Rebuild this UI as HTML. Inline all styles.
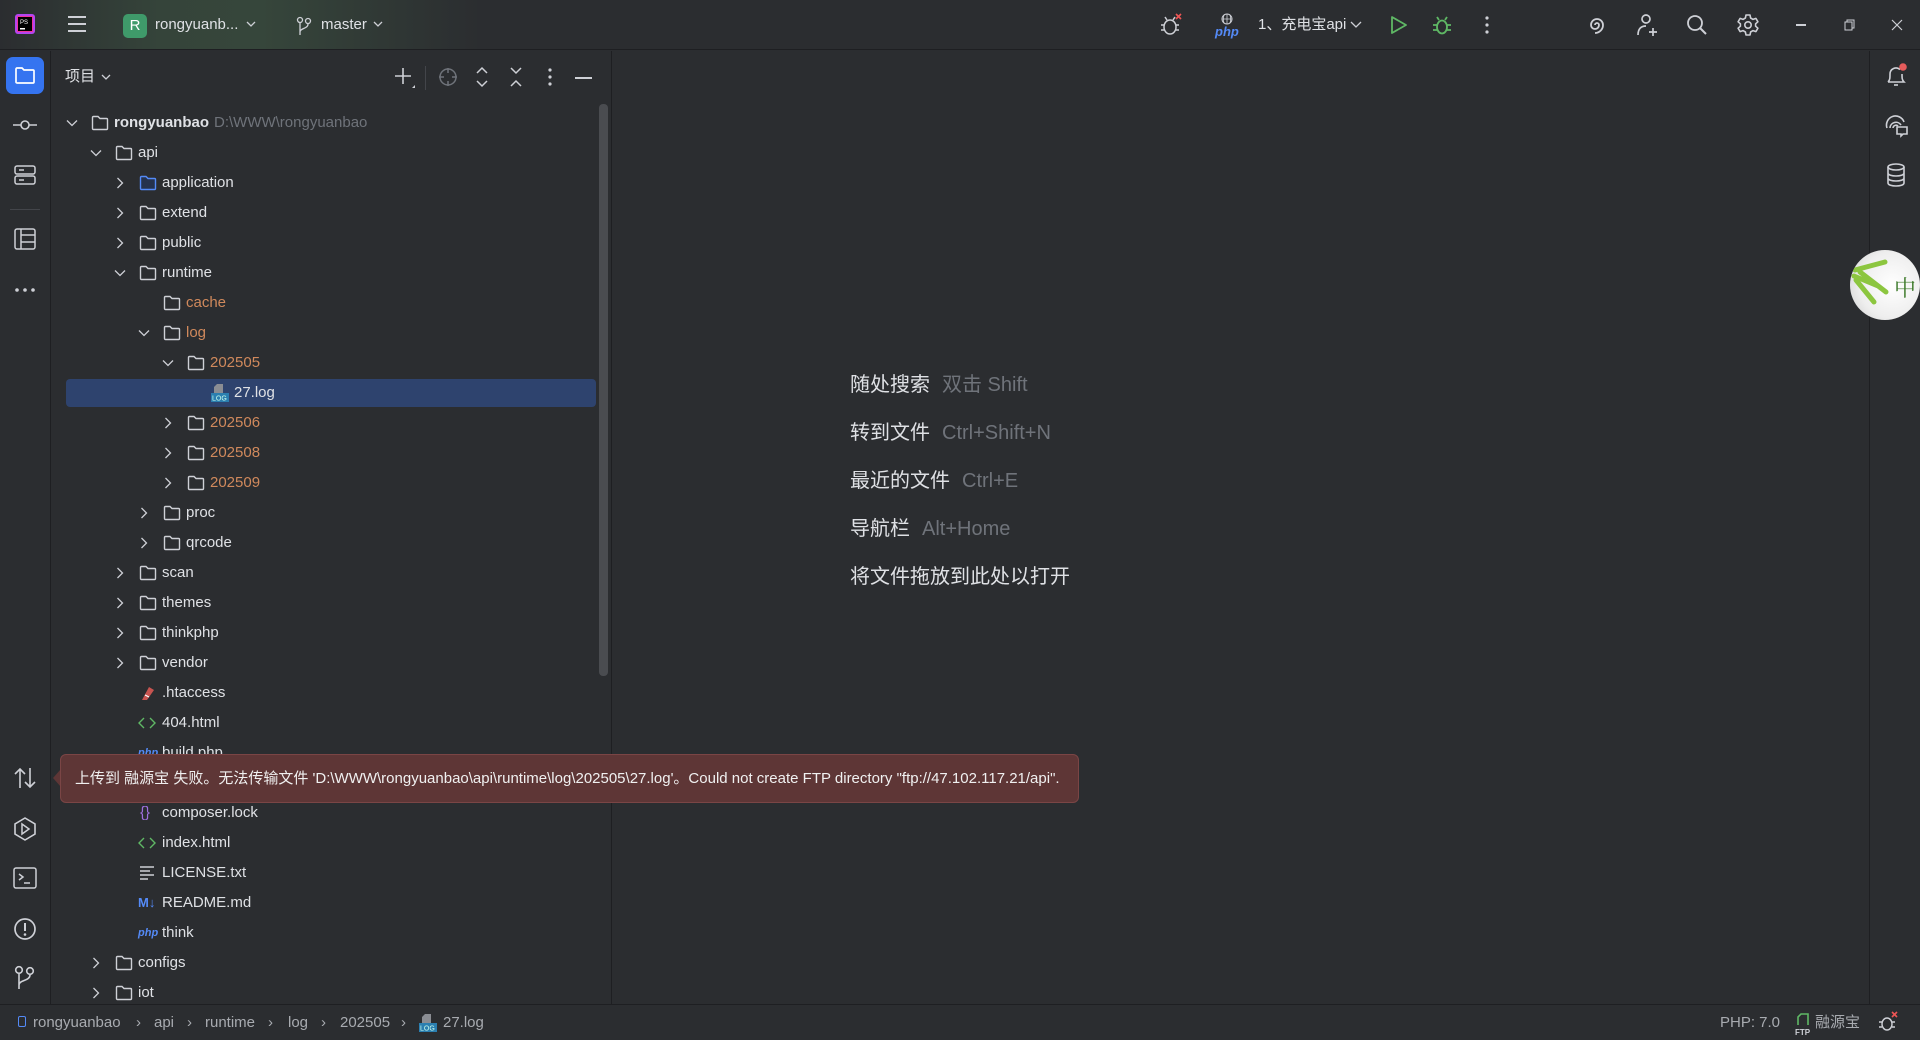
<!DOCTYPE html>
<html><head><meta charset="utf-8"><style>
*{margin:0;padding:0;box-sizing:border-box}
body{width:1920px;height:1040px;background:#2b2d30;font-family:"Liberation Sans","Noto Sans CJK SC",sans-serif;color:#dfe1e5;position:relative;overflow:hidden;font-size:15px}
.a{position:absolute}
#top{left:0;top:0;width:1920px;height:50px;background:linear-gradient(90deg,#2b2d30 0,#35443a 160px,#36463b 260px,#2b2d30 480px);border-bottom:1px solid #1e1f22}
#left{left:0;top:51px;width:51px;height:953px;border-right:1px solid #1e1f22}
#panel{left:51px;top:51px;width:561px;height:953px;border-right:1px solid #1e1f22}
#editor{left:612px;top:51px;width:1257px;height:953px;background:#2b2d30}
#right{left:1869px;top:51px;width:51px;height:953px;border-left:1px solid #1e1f22}
#status{left:0;top:1004px;width:1920px;height:36px;border-top:1px solid #1e1f22;background:#2b2d30}
#tree{position:absolute;left:0;top:2px;width:0;height:0}
.row{position:absolute;height:30px;line-height:30px;white-space:nowrap;font-size:15px}
.row svg{position:absolute;top:7px}
.or{color:#d0895c}
.hint{position:absolute;left:850px;font-size:20px;color:#dfe1e5;white-space:nowrap}
.hint span{color:#6f737a;margin-left:12px}
.bc{position:absolute;top:8px;font-size:15px;line-height:20px;color:#a8abb0;white-space:nowrap}
svg{overflow:visible}
</style></head><body>
<div id="top" class="a">
 <svg class="a" style="left:14px;top:13px" width="22" height="22" viewBox="0 0 22 22"><rect x="1" y="1" width="20" height="20" rx="3" fill="#b345f1"/><rect x="3" y="3" width="16" height="16" fill="#ff2d8a" opacity=".8"/><rect x="4" y="4" width="14" height="14" fill="#000"/><text x="6" y="11" font-size="6" fill="#fff" font-family="Liberation Sans">PS</text><rect x="6" y="15" width="5" height="1.5" fill="#fff"/></svg>
 <svg class="a" style="left:67px;top:15px" width="20" height="18"><path d="M1 2h18M1 9h18M1 16h18" stroke="#ced0d6" stroke-width="2"/></svg>
 <div class="a" style="left:123px;top:14px;width:24px;height:24px;border-radius:5px;background:#3f9a6a;color:#fff;font-size:15px;text-align:center;line-height:24px">R</div>
 <div class="a" style="left:155px;top:15px;font-size:15px;line-height:20px">rongyuanb...</div>
 <svg class="a" style="left:246px;top:21px" width="10" height="6"><path d="M1 1l4 4 4-4" stroke="#ced0d6" fill="none" stroke-width="1.3"/></svg>
 <svg class="a" style="left:297px;top:16px" width="14" height="20"><circle cx="3" cy="4" r="2.5" stroke="#ced0d6" fill="none" stroke-width="1.3"/><circle cx="11" cy="5" r="2.5" stroke="#ced0d6" fill="none" stroke-width="1.3"/><path d="M3 7v12M11 8c0 5-8 4-8 8" stroke="#ced0d6" fill="none" stroke-width="1.3"/></svg>
 <div class="a" style="left:321px;top:15px;font-size:15px;line-height:20px">master</div>
 <svg class="a" style="left:373px;top:21px" width="10" height="6"><path d="M1 1l4 4 4-4" stroke="#ced0d6" fill="none" stroke-width="1.3"/></svg>
 <svg class="a" style="left:1160px;top:13px" width="24" height="24"><ellipse cx="10" cy="14" rx="6" ry="7" stroke="#ced0d6" fill="none" stroke-width="1.5"/><path d="M4 12H1M4 17H1M16 12h3M16 17h3M7 7l-2-3M13 7l2-3" stroke="#ced0d6" stroke-width="1.5"/><path d="M16 1l5 5M21 1l-5 5" stroke="#e55" stroke-width="1.6"/></svg>
 <svg class="a" style="left:1215px;top:12px" width="24" height="26"><circle cx="12" cy="7" r="5" stroke="#ced0d6" fill="none"/><path d="M7 7h10M12 2v10M9 3c-1 3-1 5 0 8M15 3c1 3 1 5 0 8" stroke="#ced0d6" fill="none" stroke-width=".8"/><text x="0" y="24" font-size="13" font-style="italic" font-weight="bold" fill="#548af7" font-family="Liberation Sans">php</text></svg>
 <div class="a" style="left:1258px;top:15px;font-size:15px;line-height:20px">1、充电宝api</div>
 <svg class="a" style="left:1350px;top:21px" width="12" height="7"><path d="M1 1l5 5 5-5" stroke="#ced0d6" fill="none" stroke-width="1.3"/></svg>
 <svg class="a" style="left:1390px;top:15px" width="18" height="20"><path d="M2 2l14 8-14 8z" stroke="#5fb865" fill="none" stroke-width="1.8" stroke-linejoin="round"/></svg>
 <svg class="a" style="left:1432px;top:14px" width="20" height="22"><ellipse cx="10" cy="13" rx="5" ry="6.5" stroke="#5fb865" fill="none" stroke-width="1.8"/><path d="M5 11H1M5 16H1M15 11h4M15 16h4M7 6L5 3M13 6l2-3" stroke="#5fb865" stroke-width="1.8"/></svg>
 <svg class="a" style="left:1484px;top:15px" width="6" height="20"><circle cx="3" cy="3" r="1.6" fill="#ced0d6"/><circle cx="3" cy="10" r="1.6" fill="#ced0d6"/><circle cx="3" cy="17" r="1.6" fill="#ced0d6"/></svg>
 <svg class="a" style="left:1586px;top:14px" width="22" height="22"><path d="M11 11m-2 0a2 2 0 1 1 4 0a4 4 0 1 1 -8 0a6 6 0 1 1 12 0a8 8 0 0 1-8 8" stroke="#ced0d6" fill="none" stroke-width="1.8"/></svg>
 <svg class="a" style="left:1636px;top:13px" width="24" height="24"><circle cx="10" cy="6" r="4" stroke="#ced0d6" fill="none" stroke-width="1.7"/><path d="M2 22c0-6 3-9 8-9M17 15v8M13 19h8" stroke="#ced0d6" fill="none" stroke-width="1.7"/></svg>
 <svg class="a" style="left:1686px;top:14px" width="22" height="22"><circle cx="9" cy="9" r="7" stroke="#ced0d6" fill="none" stroke-width="1.8"/><path d="M14 14l6 6" stroke="#ced0d6" stroke-width="2"/></svg>
 <svg class="a" style="left:1736px;top:13px" width="24" height="24" viewBox="0 0 24 24"><path d="M10 2h4l.6 3 2.4 1.4 2.9-1 2 3.4-2.3 2v2.4l2.3 2-2 3.4-2.9-1-2.4 1.4-.6 3h-4l-.6-3-2.4-1.4-2.9 1-2-3.4 2.3-2v-2.4l-2.3-2 2-3.4 2.9 1L9.4 5z" stroke="#ced0d6" fill="none" stroke-width="1.6" stroke-linejoin="round"/><circle cx="12" cy="12" r="3.2" stroke="#ced0d6" fill="none" stroke-width="1.6"/></svg>
 <div class="a" style="left:1796px;top:24px;width:10px;height:1.5px;background:#ced0d6"></div>
 <svg class="a" style="left:1844px;top:19px" width="12" height="12"><rect x="1" y="3" width="7" height="8" stroke="#ced0d6" fill="none"/><path d="M3 3V1h7v8H8" stroke="#ced0d6" fill="none"/></svg>
 <svg class="a" style="left:1891px;top:19px" width="12" height="12"><path d="M1 1l10 10M11 1L1 11" stroke="#ced0d6" stroke-width="1.2"/></svg>
</div>

<div id="left" class="a">
 <div class="a" style="left:6px;top:6px;width:38px;height:37px;border-radius:7px;background:#3574f0"></div>
 <svg class="a" style="left:14px;top:15px" width="22" height="19"><path d="M2 3a1 1 0 0 1 1-1h5l2 2h9a1 1 0 0 1 1 1v11a1 1 0 0 1-1 1H3a1 1 0 0 1-1-1z" stroke="#fff" fill="none" stroke-width="1.7"/></svg>
 <svg class="a" style="left:12px;top:67px" width="26" height="14"><circle cx="13" cy="7" r="4" stroke="#ced0d6" fill="none" stroke-width="1.6"/><path d="M1 7h8M17 7h8" stroke="#ced0d6" stroke-width="1.6"/></svg>
 <svg class="a" style="left:14px;top:114px" width="22" height="20"><rect x="1" y="1" width="20" height="8" rx="2" stroke="#ced0d6" fill="none" stroke-width="1.5"/><rect x="1" y="11" width="20" height="8" rx="2" stroke="#ced0d6" fill="none" stroke-width="1.5"/><path d="M5 5h5M5 15h5" stroke="#ced0d6" stroke-width="1.5"/></svg>
 <div class="a" style="left:10px;top:158px;width:30px;height:1px;background:#43454a"></div>
 <svg class="a" style="left:14px;top:177px" width="22" height="22"><rect x="1" y="1" width="20" height="20" rx="2" stroke="#ced0d6" fill="none" stroke-width="1.5"/><path d="M7 1v20M7 7h14M7 14h14" stroke="#ced0d6" stroke-width="1.5"/></svg>
 <svg class="a" style="left:14px;top:236px" width="22" height="6"><circle cx="3" cy="3" r="1.8" fill="#ced0d6"/><circle cx="11" cy="3" r="1.8" fill="#ced0d6"/><circle cx="19" cy="3" r="1.8" fill="#ced0d6"/></svg>
 <svg class="a" style="left:14px;top:716px" width="22" height="22"><path d="M6 21V2M1 7l5-5 5 5M16 1v19M11 15l5 5 5-5" stroke="#ced0d6" fill="none" stroke-width="1.6"/></svg>
 <svg class="a" style="left:13px;top:766px" width="24" height="24"><path d="M12 1l10 6v10l-10 6-10-6V7z" stroke="#ced0d6" fill="none" stroke-width="1.6"/><path d="M9 7l7 5-7 5z" stroke="#ced0d6" fill="none" stroke-width="1.5"/></svg>
 <svg class="a" style="left:13px;top:816px" width="24" height="22"><rect x="1" y="1" width="22" height="20" rx="2" stroke="#ced0d6" fill="none" stroke-width="1.5"/><path d="M6 7l4 3-4 3M11 16h6" stroke="#ced0d6" fill="none" stroke-width="1.5"/></svg>
 <svg class="a" style="left:13px;top:866px" width="24" height="24"><circle cx="12" cy="12" r="10" stroke="#ced0d6" fill="none" stroke-width="1.7"/><path d="M12 6v8" stroke="#ced0d6" stroke-width="2"/><circle cx="12" cy="17.5" r="1.3" fill="#ced0d6"/></svg>
 <svg class="a" style="left:14px;top:914px" width="22" height="26"><circle cx="5" cy="5" r="3.3" stroke="#ced0d6" fill="none" stroke-width="1.6"/><circle cx="16" cy="6" r="3.3" stroke="#ced0d6" fill="none" stroke-width="1.6"/><path d="M5 9v15M16 10c0 6-11 5-11 10" stroke="#ced0d6" fill="none" stroke-width="1.6"/></svg>
</div>

<div id="panel" class="a">
 <div class="a" style="left:14px;top:15px;font-size:15px;line-height:22px">项目</div>
 <svg class="a" style="left:50px;top:23px" width="10" height="6"><path d="M1 1l4 4 4-4" stroke="#ced0d6" fill="none" stroke-width="1.3"/></svg>
 <svg class="a" style="left:343px;top:16px" width="22" height="22"><path d="M9 1v16M1 9h16" stroke="#ced0d6" stroke-width="1.6"/><path d="M21 18v3h-3z" fill="#ced0d6"/></svg>
 <div class="a" style="left:374px;top:15px;width:1px;height:24px;background:#43454a"></div>
 <svg class="a" style="left:387px;top:16px" width="20" height="20"><circle cx="10" cy="10" r="8" stroke="#6f737a" fill="none" stroke-width="1.5"/><path d="M10 1v5M10 14v5M1 10h5M14 10h5" stroke="#6f737a" stroke-width="1.5"/></svg>
 <svg class="a" style="left:425px;top:16px" width="12" height="20"><path d="M1 6l5-5 5 5M1 14l5 5 5-5" stroke="#ced0d6" fill="none" stroke-width="1.5"/></svg>
 <svg class="a" style="left:459px;top:16px" width="12" height="20"><path d="M1 1l5 5 5-5M1 19l5-5 5 5" stroke="#ced0d6" fill="none" stroke-width="1.5"/></svg>
 <svg class="a" style="left:497px;top:17px" width="4" height="18"><circle cx="2" cy="2" r="1.6" fill="#ced0d6"/><circle cx="2" cy="9" r="1.6" fill="#ced0d6"/><circle cx="2" cy="16" r="1.6" fill="#ced0d6"/></svg>
 <div class="a" style="left:524px;top:26px;width:17px;height:1.6px;background:#ced0d6"></div>
 <div class="a" style="left:548px;top:53px;width:9px;height:572px;border-radius:4px;background:#4a4c50"></div>
</div>

<svg width="0" height="0" style="position:absolute"><defs>
<symbol id="fo" viewBox="0 0 18 16"><path d="M1.5 2.5a1 1 0 0 1 1-1h4.5l2 2h6.5a1 1 0 0 1 1 1v9a1 1 0 0 1-1 1h-13a1 1 0 0 1-1-1z" stroke="#ced0d6" stroke-width="1.4" fill="#2b2d30"/></symbol>
<symbol id="fb" viewBox="0 0 18 16"><path d="M1.5 2.5a1 1 0 0 1 1-1h4.5l2 2h6.5a1 1 0 0 1 1 1v9a1 1 0 0 1-1 1h-13a1 1 0 0 1-1-1z" stroke="#548af7" stroke-width="1.4" fill="#25324d"/></symbol>
<symbol id="dn" viewBox="0 0 12 8"><path d="M1 1.5l5 5 5-5" stroke="#ced0d6" fill="none" stroke-width="1.3"/></symbol>
<symbol id="rt" viewBox="0 0 8 12"><path d="M1.5 1l5 5-5 5" stroke="#ced0d6" fill="none" stroke-width="1.3"/></symbol>
</defs></svg>

<div id="tree">
<div class="a" style="left:66px;top:377px;width:530px;height:28px;border-radius:4px;background:#2e436e"></div>
<div class="row" style="left:66px;top:106px;width:540px">
 <svg style="left:0;top:11px" width="12" height="8"><use href="#dn"/></svg>
 <svg style="left:25px" width="18" height="16"><use href="#fo"/></svg>
 <span style="position:absolute;left:48px;font-weight:bold">rongyuanbao</span><span style="position:absolute;left:148px;color:#6f737a">D:\WWW\rongyuanbao</span>
</div>
<div class="row" style="left:90px;top:136px"><svg style="left:0;top:11px" width="12" height="8"><use href="#dn"/></svg><svg style="left:25px" width="18" height="16"><use href="#fo"/></svg><span style="position:absolute;left:48px">api</span></div>
<div class="row" style="left:116px;top:166px"><svg style="left:0;top:9px" width="8" height="12"><use href="#rt"/></svg><svg style="left:23px" width="18" height="16"><use href="#fb"/></svg><span style="position:absolute;left:46px">application</span></div>
<div class="row" style="left:116px;top:196px"><svg style="left:0;top:9px" width="8" height="12"><use href="#rt"/></svg><svg style="left:23px" width="18" height="16"><use href="#fo"/></svg><span style="position:absolute;left:46px">extend</span></div>
<div class="row" style="left:116px;top:226px"><svg style="left:0;top:9px" width="8" height="12"><use href="#rt"/></svg><svg style="left:23px" width="18" height="16"><use href="#fo"/></svg><span style="position:absolute;left:46px">public</span></div>
<div class="row" style="left:114px;top:256px"><svg style="left:0;top:11px" width="12" height="8"><use href="#dn"/></svg><svg style="left:25px" width="18" height="16"><use href="#fo"/></svg><span style="position:absolute;left:48px">runtime</span></div>
<div class="row or" style="left:138px;top:286px"><svg style="left:25px" width="18" height="16"><use href="#fo"/></svg><span style="position:absolute;left:48px">cache</span></div>
<div class="row or" style="left:138px;top:316px"><svg style="left:0;top:11px" width="12" height="8"><use href="#dn"/></svg><svg style="left:25px" width="18" height="16"><use href="#fo"/></svg><span style="position:absolute;left:48px">log</span></div>
<div class="row or" style="left:162px;top:346px"><svg style="left:0;top:11px" width="12" height="8"><use href="#dn"/></svg><svg style="left:25px" width="18" height="16"><use href="#fo"/></svg><span style="position:absolute;left:48px">202505</span></div>
<div class="row" style="left:210px;top:376px">
 <svg style="left:1px;top:6px" width="18" height="18"><path d="M6 0h6v9H3V3z" fill="#8a8d93"/><rect x="0" y="9" width="18" height="9" fill="#2b7fb0"/><text x="1" y="16.5" font-size="7" fill="#cfe" font-family="Liberation Sans">LOG</text></svg>
 <span style="position:absolute;left:24px">27.log</span></div>
<div class="row or" style="left:164px;top:406px"><svg style="left:0;top:9px" width="8" height="12"><use href="#rt"/></svg><svg style="left:23px" width="18" height="16"><use href="#fo"/></svg><span style="position:absolute;left:46px">202506</span></div>
<div class="row or" style="left:164px;top:436px"><svg style="left:0;top:9px" width="8" height="12"><use href="#rt"/></svg><svg style="left:23px" width="18" height="16"><use href="#fo"/></svg><span style="position:absolute;left:46px">202508</span></div>
<div class="row or" style="left:164px;top:466px"><svg style="left:0;top:9px" width="8" height="12"><use href="#rt"/></svg><svg style="left:23px" width="18" height="16"><use href="#fo"/></svg><span style="position:absolute;left:46px">202509</span></div>
<div class="row" style="left:140px;top:496px"><svg style="left:0;top:9px" width="8" height="12"><use href="#rt"/></svg><svg style="left:23px" width="18" height="16"><use href="#fo"/></svg><span style="position:absolute;left:46px">proc</span></div>
<div class="row" style="left:140px;top:526px"><svg style="left:0;top:9px" width="8" height="12"><use href="#rt"/></svg><svg style="left:23px" width="18" height="16"><use href="#fo"/></svg><span style="position:absolute;left:46px">qrcode</span></div>
<div class="row" style="left:116px;top:556px"><svg style="left:0;top:9px" width="8" height="12"><use href="#rt"/></svg><svg style="left:23px" width="18" height="16"><use href="#fo"/></svg><span style="position:absolute;left:46px">scan</span></div>
<div class="row" style="left:116px;top:586px"><svg style="left:0;top:9px" width="8" height="12"><use href="#rt"/></svg><svg style="left:23px" width="18" height="16"><use href="#fo"/></svg><span style="position:absolute;left:46px">themes</span></div>
<div class="row" style="left:116px;top:616px"><svg style="left:0;top:9px" width="8" height="12"><use href="#rt"/></svg><svg style="left:23px" width="18" height="16"><use href="#fo"/></svg><span style="position:absolute;left:46px">thinkphp</span></div>
<div class="row" style="left:116px;top:646px"><svg style="left:0;top:9px" width="8" height="12"><use href="#rt"/></svg><svg style="left:23px" width="18" height="16"><use href="#fo"/></svg><span style="position:absolute;left:46px">vendor</span></div>
<div class="row" style="left:138px;top:676px"><svg style="left:2px;top:7px" width="16" height="16"><path d="M2 15L9 2l5 3-7 10z" fill="#c75450"/><path d="M5 10l4 2" stroke="#fff" stroke-width="1.2"/></svg><span style="position:absolute;left:24px">.htaccess</span></div>
<div class="row" style="left:138px;top:706px"><svg style="left:0;top:9px" width="18" height="12"><path d="M6 1L1 6l5 5M12 1l5 5-5 5" stroke="#5fb865" fill="none" stroke-width="1.4"/></svg><span style="position:absolute;left:24px">404.html</span></div>
<div class="row" style="left:138px;top:736px"><span style="position:absolute;left:0;font-size:11px;font-style:italic;font-weight:bold;color:#548af7">php</span><span style="position:absolute;left:24px">build.php</span></div>
<div class="row" style="left:138px;top:796px"><span style="position:absolute;left:2px;color:#a070e0;font-size:15px">{}</span><span style="position:absolute;left:24px">composer.lock</span></div>
<div class="row" style="left:138px;top:826px"><svg style="left:0;top:9px" width="18" height="12"><path d="M6 1L1 6l5 5M12 1l5 5-5 5" stroke="#5fb865" fill="none" stroke-width="1.4"/></svg><span style="position:absolute;left:24px">index.html</span></div>
<div class="row" style="left:138px;top:856px"><svg style="left:2px;top:8px" width="14" height="14"><path d="M0 1h14M0 5h10M0 9h14M0 13h8" stroke="#ced0d6" stroke-width="1.4"/></svg><span style="position:absolute;left:24px">LICENSE.txt</span></div>
<div class="row" style="left:138px;top:886px"><span style="position:absolute;left:0;font-size:13px;font-weight:bold;color:#548af7">M↓</span><span style="position:absolute;left:24px">README.md</span></div>
<div class="row" style="left:138px;top:916px"><span style="position:absolute;left:0;font-size:11px;font-style:italic;font-weight:bold;color:#548af7">php</span><span style="position:absolute;left:24px">think</span></div>
<div class="row" style="left:92px;top:946px"><svg style="left:0;top:9px" width="8" height="12"><use href="#rt"/></svg><svg style="left:23px" width="18" height="16"><use href="#fo"/></svg><span style="position:absolute;left:46px">configs</span></div>
<div class="row" style="left:92px;top:976px"><svg style="left:0;top:9px" width="8" height="12"><use href="#rt"/></svg><svg style="left:23px" width="18" height="16"><use href="#fo"/></svg><span style="position:absolute;left:46px">iot</span></div>
</div>

<div id="editor" class="a"></div>
<div class="hint" style="top:368px">随处搜索<span>双击 Shift</span></div>
<div class="hint" style="top:416px">转到文件<span>Ctrl+Shift+N</span></div>
<div class="hint" style="top:464px">最近的文件<span>Ctrl+E</span></div>
<div class="hint" style="top:512px">导航栏<span>Alt+Home</span></div>
<div class="hint" style="top:560px">将文件拖放到此处以打开</div>

<div id="right" class="a">
 <svg class="a" style="left:14px;top:12px" width="26" height="26"><path d="M4 19c2-2 2-4 2-8a6 6 0 0 1 10-4.5M18 11c0 4 0 6 2 8H4" stroke="#ced0d6" fill="none" stroke-width="1.6"/><path d="M10 22h4" stroke="#ced0d6" stroke-width="1.6"/><circle cx="19" cy="4" r="3.8" fill="#e55b5b"/></svg>
 <svg class="a" style="left:14px;top:63px" width="26" height="24"><path d="M3 14a9 9 0 0 1 17-6M6 14a6 6 0 0 1 11-3M9 14a3 3 0 0 1 5-2" stroke="#ced0d6" fill="none" stroke-width="1.6"/><path d="M13 13h10v7h-4l-2 2v-2h-4z" stroke="#ced0d6" fill="#2b2d30" stroke-width="1.6"/></svg>
 <svg class="a" style="left:16px;top:112px" width="20" height="24"><ellipse cx="10" cy="4" rx="8" ry="3" stroke="#ced0d6" fill="none" stroke-width="1.6"/><path d="M2 4v16c0 4 16 4 16 0V4M2 10c0 4 16 4 16 0M2 15c0 4 16 4 16 0" stroke="#ced0d6" fill="none" stroke-width="1.6"/></svg>
</div>
<div class="a" style="left:1850px;top:250px;width:70px;height:70px;border-radius:50%;background:radial-gradient(circle at 60% 50%,#fff 0,#eee 60%,#ccc 100%);overflow:hidden">
 <svg width="70" height="70"><path d="M5 20l30-8M4 26l24 10M6 30l18 22M10 22l26 20" stroke="#8cc63f" stroke-width="5" stroke-linecap="round"/><text x="44" y="46" font-size="22" fill="#3d7a2a" font-family="Noto Serif CJK SC,serif">中</text></svg>
</div>

<svg class="a" style="left:52px;top:769px" width="10" height="18"><path d="M9 0L1 9l8 9z" fill="#5e3636"/></svg>
<div class="a" style="left:60px;top:754px;width:1019px;height:49px;background:#5e3636;border:1px solid #7a4545;border-radius:6px;font-size:15px;line-height:47px;padding-left:14px;white-space:nowrap;color:#f0f0f0">上传到 融源宝 失败。无法传输文件 'D:\WWW\rongyuanbao\api\runtime\log\202505\27.log'。Could not create FTP directory "ftp://47.102.117.21/api".</div>

<div id="status" class="a">
 <div class="a" style="left:18px;top:11px;width:8px;height:11px;border:1.5px solid #548af7;border-radius:2px"></div>
 <div class="bc" style="left:33px">rongyuanbao</div>
 <div class="bc" style="left:136px">›</div>
 <div class="bc" style="left:154px">api</div>
 <div class="bc" style="left:187px">›</div>
 <div class="bc" style="left:205px">runtime</div>
 <div class="bc" style="left:268px">›</div>
 <div class="bc" style="left:288px">log</div>
 <div class="bc" style="left:321px">›</div>
 <div class="bc" style="left:340px">202505</div>
 <div class="bc" style="left:401px">›</div>
 <svg class="a" style="left:419px;top:8px" width="18" height="20"><path d="M6 1h6v9H3V4z" fill="#8a8d93"/><rect x="0" y="10" width="18" height="9" fill="#2b7fb0"/><text x="1" y="17.5" font-size="7" fill="#cfe" font-family="Liberation Sans">LOG</text></svg>
 <div class="bc" style="left:443px">27.log</div>
 <div class="bc" style="left:1720px">PHP: 7.0</div>
 <svg class="a" style="left:1795px;top:7px" width="18" height="24"><path d="M3 13V5l3-3h7v11" stroke="#5fb865" fill="none" stroke-width="1.6"/><text x="0" y="23" font-size="8" font-weight="bold" fill="#ced0d6" font-family="Liberation Sans">FTP</text></svg>
 <div class="bc" style="left:1815px">融源宝</div>
 <svg class="a" style="left:1878px;top:6px" width="22" height="22"><ellipse cx="9" cy="13" rx="5" ry="6" stroke="#ced0d6" fill="none" stroke-width="1.4"/><path d="M4 11H1M4 16H1M14 11h3M14 16h3" stroke="#ced0d6" stroke-width="1.4"/><path d="M14 1l5 5M19 1l-5 5" stroke="#e55" stroke-width="1.6"/></svg>
</div>
</body></html>
